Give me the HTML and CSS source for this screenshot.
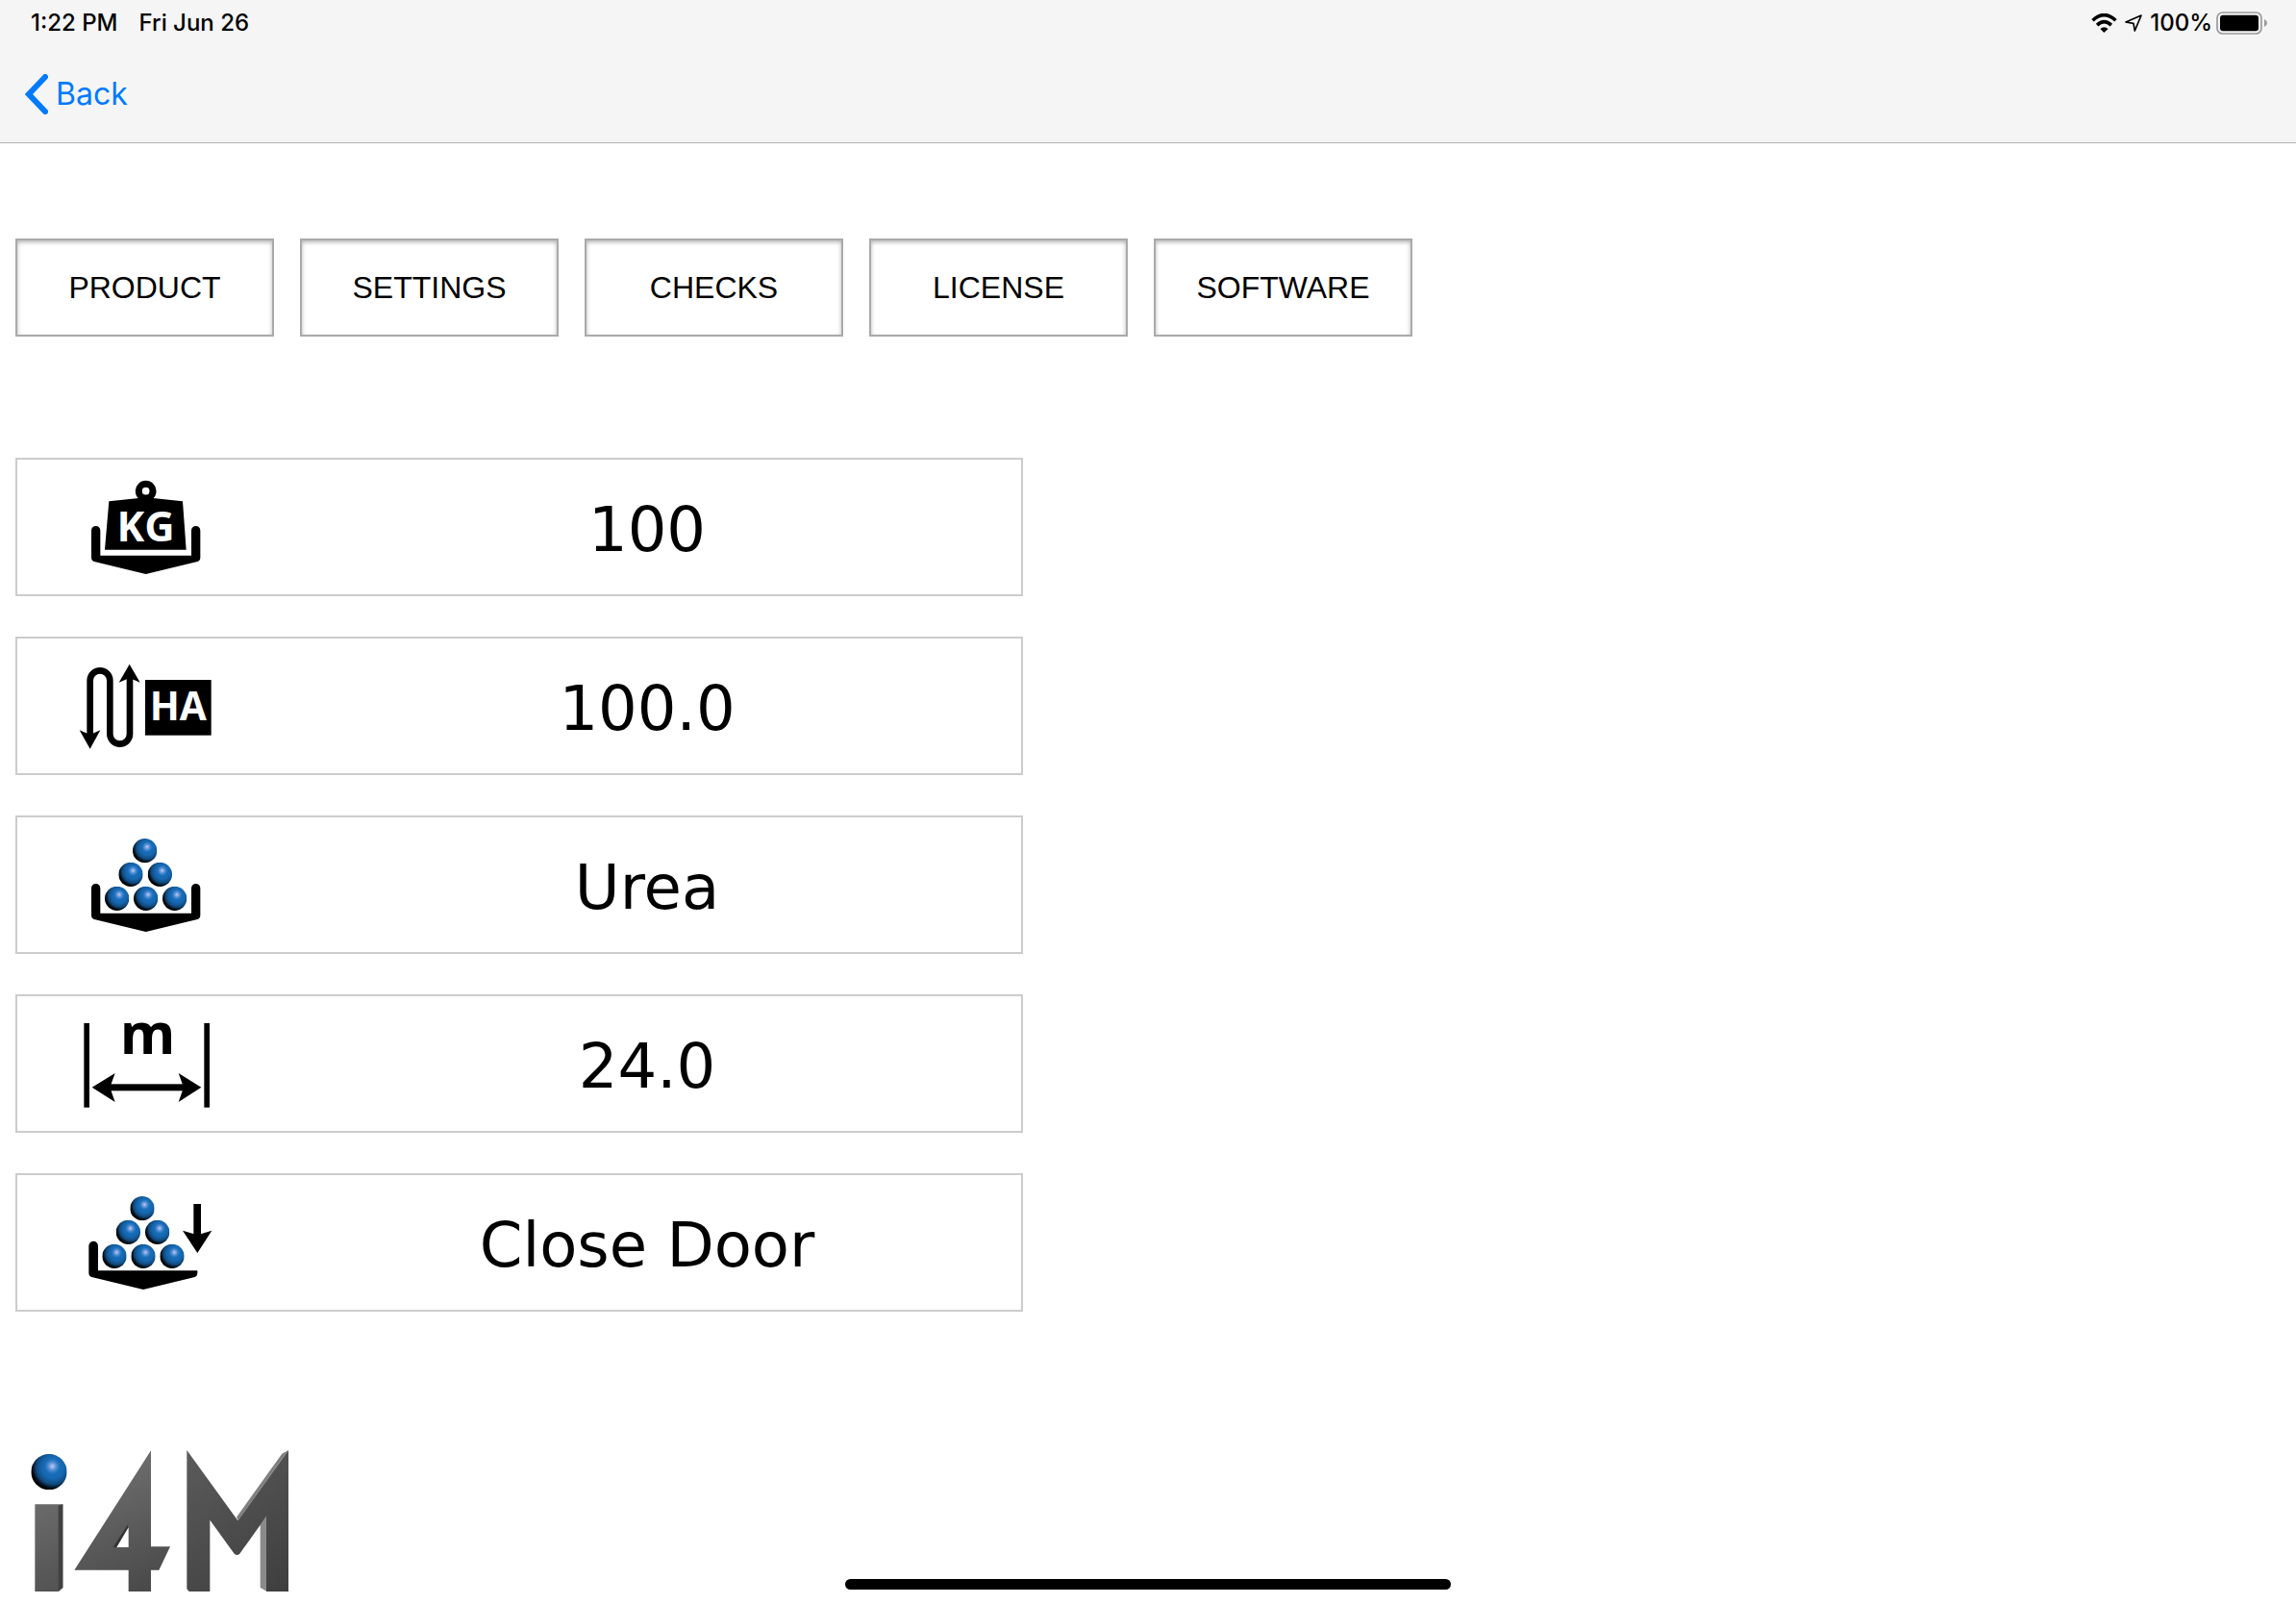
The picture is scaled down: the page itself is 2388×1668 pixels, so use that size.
FILE: index.html
```html
<!DOCTYPE html>
<html lang="en">
<head>
<meta charset="utf-8">
<meta name="viewport" content="width=device-width, initial-scale=1">
<title>i4M Product</title>
<link rel="stylesheet" href="styles.css">
</head>
<body>
<svg class="defs" aria-hidden="true">
  <defs>
    <radialGradient id="ball-body" cx="0.61" cy="0.38" r="0.62">
      <stop offset="0" stop-color="#1a74c2"/>
      <stop offset="0.5" stop-color="#1567b0"/>
      <stop offset="0.75" stop-color="#10497c"/>
      <stop offset="0.93" stop-color="#020a12"/>
      <stop offset="1" stop-color="#000"/>
    </radialGradient>
    <radialGradient id="ball-shine">
      <stop offset="0" stop-color="#c4ccf6"/>
      <stop offset="0.4" stop-color="#86a8e4" stop-opacity="0.7"/>
      <stop offset="1" stop-color="#3080d0" stop-opacity="0"/>
    </radialGradient>
    <linearGradient id="metal" gradientUnits="userSpaceOnUse" x1="300" y1="60" x2="480" y2="500">
      <stop offset="0" stop-color="#727272"/>
      <stop offset="1" stop-color="#484848"/>
    </linearGradient>
    <linearGradient id="metal-dark" gradientUnits="userSpaceOnUse" x1="590" y1="80" x2="900" y2="500">
      <stop offset="0" stop-color="#5a5a5a"/>
      <stop offset="1" stop-color="#3e3e3e"/>
    </linearGradient>
    <symbol id="ball" viewBox="0 0 76 76">
      <circle cx="38" cy="38" r="38" fill="url(#ball-body)"/>
      <circle cx="45" cy="26" r="18" fill="url(#ball-shine)"/>
    </symbol>
    <g id="pile">
      <use href="#ball" x="261" y="51" width="76" height="76"/>
      <use href="#ball" x="217" y="125" width="76" height="76"/>
      <use href="#ball" x="308" y="125" width="76" height="76"/>
      <use href="#ball" x="174" y="200" width="76" height="76"/>
      <use href="#ball" x="264" y="200" width="76" height="76"/>
      <use href="#ball" x="354" y="200" width="76" height="76"/>
    </g>
    <path id="tray" d="M132 206a14 14 0 0 1 28 0V284H444V206a14 14 0 0 1 28 0V290Q472 301 460 304L302 342L144 304Q132 301 132 290Z"/>
  </defs>
</svg>

<header class="topbar">
  <div class="status">
    <div class="status-group status-left">
      <span>1:22 PM</span>
      <span>Fri Jun 26</span>
    </div>
    <div class="status-group">
      <svg class="wifi" viewBox="0 0 81 61" aria-label="Wi-Fi">
        <g fill="none" stroke="#000" stroke-width="11">
          <path d="M4 22Q40 -12 77 22"/>
          <path d="M18 37Q40 16 63 37"/>
        </g>
        <path d="M28 49Q40 38 53 49L40 61Z"/>
      </svg>
      <svg class="location" viewBox="0 0 54 54" aria-label="Location">
        <path d="M51 3L31 51L27 28L3 24Z" fill="none" stroke="#000" stroke-width="5" stroke-linejoin="round"/>
      </svg>
      <span>100%</span>
      <svg class="battery" viewBox="0 0 159 72" aria-label="Battery full">
        <rect x="3" y="3" width="138" height="66" rx="17" fill="none" stroke="#9a9a9a" stroke-width="5"/>
        <rect x="12" y="11" width="120" height="50" rx="9"/>
        <path d="M150 24Q159 28 159 36T150 48Z" fill="#9a9a9a"/>
      </svg>
    </div>
  </div>
  <button class="back" type="button">
    <svg class="chevron" viewBox="0 0 24 42" aria-hidden="true">
      <path d="M21 3L4 21L21 39" fill="none" stroke="#007aff" stroke-width="6" stroke-linecap="round"/>
    </svg>
    Back
  </button>
</header>

<main class="content">
  <nav class="tabs">
    <button class="tab" type="button">PRODUCT</button>
    <button class="tab" type="button">SETTINGS</button>
    <button class="tab" type="button">CHECKS</button>
    <button class="tab" type="button">LICENSE</button>
    <button class="tab" type="button">SOFTWARE</button>
  </nav>

  <div class="rows">
    <button class="row" type="button">
      <svg class="row-icon" viewBox="0 0 600 390">
        <use href="#tray"/>
        <path d="M187 115L280 105H324L417 115L428 266H174Z"/>
        <circle cx="302" cy="83" r="22" fill="#fff" stroke="#000" stroke-width="21"/>
        <text class="icon-text icon-kg" x="302" y="241">KG</text>
      </svg>
      <span class="row-value">100</span>
    </button>
    <button class="row" type="button">
      <svg class="row-icon" viewBox="0 0 600 390">
        <path d="M128 290V116a31 31 0 0 1 62 0V283a31 31 0 0 0 62 0V100" fill="none" stroke="#000" stroke-width="20"/>
        <path d="M251 65L284 122L251 108L218 122Z"/>
        <path d="M128 329L95 271L128 285L160 271Z"/>
        <rect x="300" y="114" width="206" height="173"/>
        <text class="icon-text icon-ha" x="403" y="240">HA</text>
      </svg>
      <span class="row-value">100.0</span>
    </button>
    <button class="row" type="button">
      <svg class="row-icon" viewBox="0 0 600 390">
        <use href="#tray"/>
        <use href="#pile"/>
      </svg>
      <span class="row-value">Urea</span>
    </button>
    <button class="row" type="button">
      <svg class="row-icon" viewBox="0 0 600 390">
        <rect x="109" y="69" width="17" height="263"/>
        <rect x="484" y="69" width="17" height="263"/>
        <rect x="180" y="259" width="250" height="21"/>
        <path d="M134 269L206 225L190 269L206 315Z"/>
        <path d="M475 269L404 225L420 269L404 315Z"/>
        <text class="icon-text icon-m" x="308" y="166">m</text>
      </svg>
      <span class="row-value">24.0</span>
    </button>
    <button class="row" type="button">
      <svg class="row-icon" viewBox="0 0 600 390">
        <path d="M124 206a14 14 0 0 1 29 0V283H463V290Q463 301 452 304L294 342L136 304Q124 301 124 290Z"/>
        <use href="#pile" x="-8"/>
        <rect x="451" y="75" width="23" height="105"/>
        <path d="M463 228L417 158L463 172L508 158Z"/>
      </svg>
      <span class="row-value">Close Door</span>
    </button>
  </div>

  <svg class="logo" viewBox="90 54 816 450" role="img" aria-label="i4M">
    <use href="#ball" x="97" y="69" width="112" height="112"/>
    <path d="M109 226H196V486L182 498H109Z" fill="url(#metal)"/>
    <path d="M182 230L196 226V486L182 498Z" fill="#414141"/>
    <path fill-rule="evenodd" d="M471 58V358H531L496 431H471V498H401V431H232ZM401 288L358 360H401Z" fill="url(#metal)"/>
    <path d="M401 286L353 360H364L401 298Z" fill="#333"/>
    <path d="M812 290L833 262V498L812 486Z" fill="#8a8a8a"/>
    <path d="M583 57L742 277L900 57V498H831V264L748 380Q740 388 731 380L655 275V498H590L583 490Z" fill="url(#metal-dark)"/>
    <path d="M900 57L880 68L738 266L743 276Z" fill="#808080"/>
  </svg>
</main>
<div class="home-indicator"></div>
</body>
</html>
```
FILE: styles.css
```css
* {
  box-sizing: border-box;
}

body {
  margin: 0;
  min-height: 100vh;
  background: #fff;
  color: #000;
  font-family: "Liberation Sans", Arial, sans-serif;
}

button {
  margin: 0;
  padding: 0;
  border: 0;
  background: none;
  color: inherit;
  font: inherit;
  cursor: pointer;
}

svg {
  display: block;
  flex: none;
}

.defs {
  position: absolute;
  width: 0;
  height: 0;
}

.topbar {
  height: 149px;
  border-bottom: 1px solid #b2b2b2;
  background: #f6f5f6;
  font-family: Inter, sans-serif;
}

.status {
  display: flex;
  justify-content: space-between;
  height: 47px;
  padding: 0 30px 0 32px;
  font-size: 24px;
  font-weight: 500;
}

.status-group {
  display: flex;
  align-items: center;
  gap: 4px;
}

.status-left {
  gap: 22px;
}

.wifi {
  width: 27px;
  height: 20px;
}

.location {
  width: 18px;
  height: 18px;
  margin: 0 4px;
}

.battery {
  width: 53px;
  height: 24px;
}

.back {
  display: flex;
  align-items: center;
  gap: 8px;
  height: 101px;
  padding-left: 26px;
  color: #007aff;
  font-size: 32px;
}

.chevron {
  width: 24px;
  height: 42px;
}

.content {
  padding: 99px 16px 0;
}

.tabs {
  display: flex;
  flex-wrap: wrap;
  gap: 27px;
}

.tab {
  width: 269px;
  height: 102px;
  border: 2px solid #aaa;
  box-shadow: inset 0 2px 4px rgba(0, 0, 0, 0.3);
  font-size: 32px;
}

.rows {
  display: grid;
  gap: 42px;
  max-width: 1048px;
  margin-top: 126px;
}

.row {
  display: grid;
  grid-template-columns: 266px 1fr;
  align-items: center;
  justify-items: center;
  height: 144px;
  border: 2px solid #ccc;
}

.row-icon {
  width: 200px;
  height: 130px;
  overflow: visible;
}

.row-value {
  padding-top: 6px;
  font-family: Verdana, "DejaVu Sans", sans-serif;
  font-size: 64px;
  line-height: 80px;
}

.icon-text {
  font-family: "Open Sans", sans-serif;
  font-weight: 700;
  text-anchor: middle;
  fill: #fff;
}

.icon-kg {
  font-size: 130px;
}

.icon-ha {
  font-size: 122px;
}

.icon-m {
  font-size: 176px;
  fill: #000;
}

.logo {
  width: 272px;
  height: 150px;
  margin: 143px 0 0 14px;
}

.home-indicator {
  position: fixed;
  bottom: 15px;
  left: 50%;
  width: 630px;
  height: 11px;
  border-radius: 6px;
  background: #000;
  transform: translateX(-50%);
}
```
